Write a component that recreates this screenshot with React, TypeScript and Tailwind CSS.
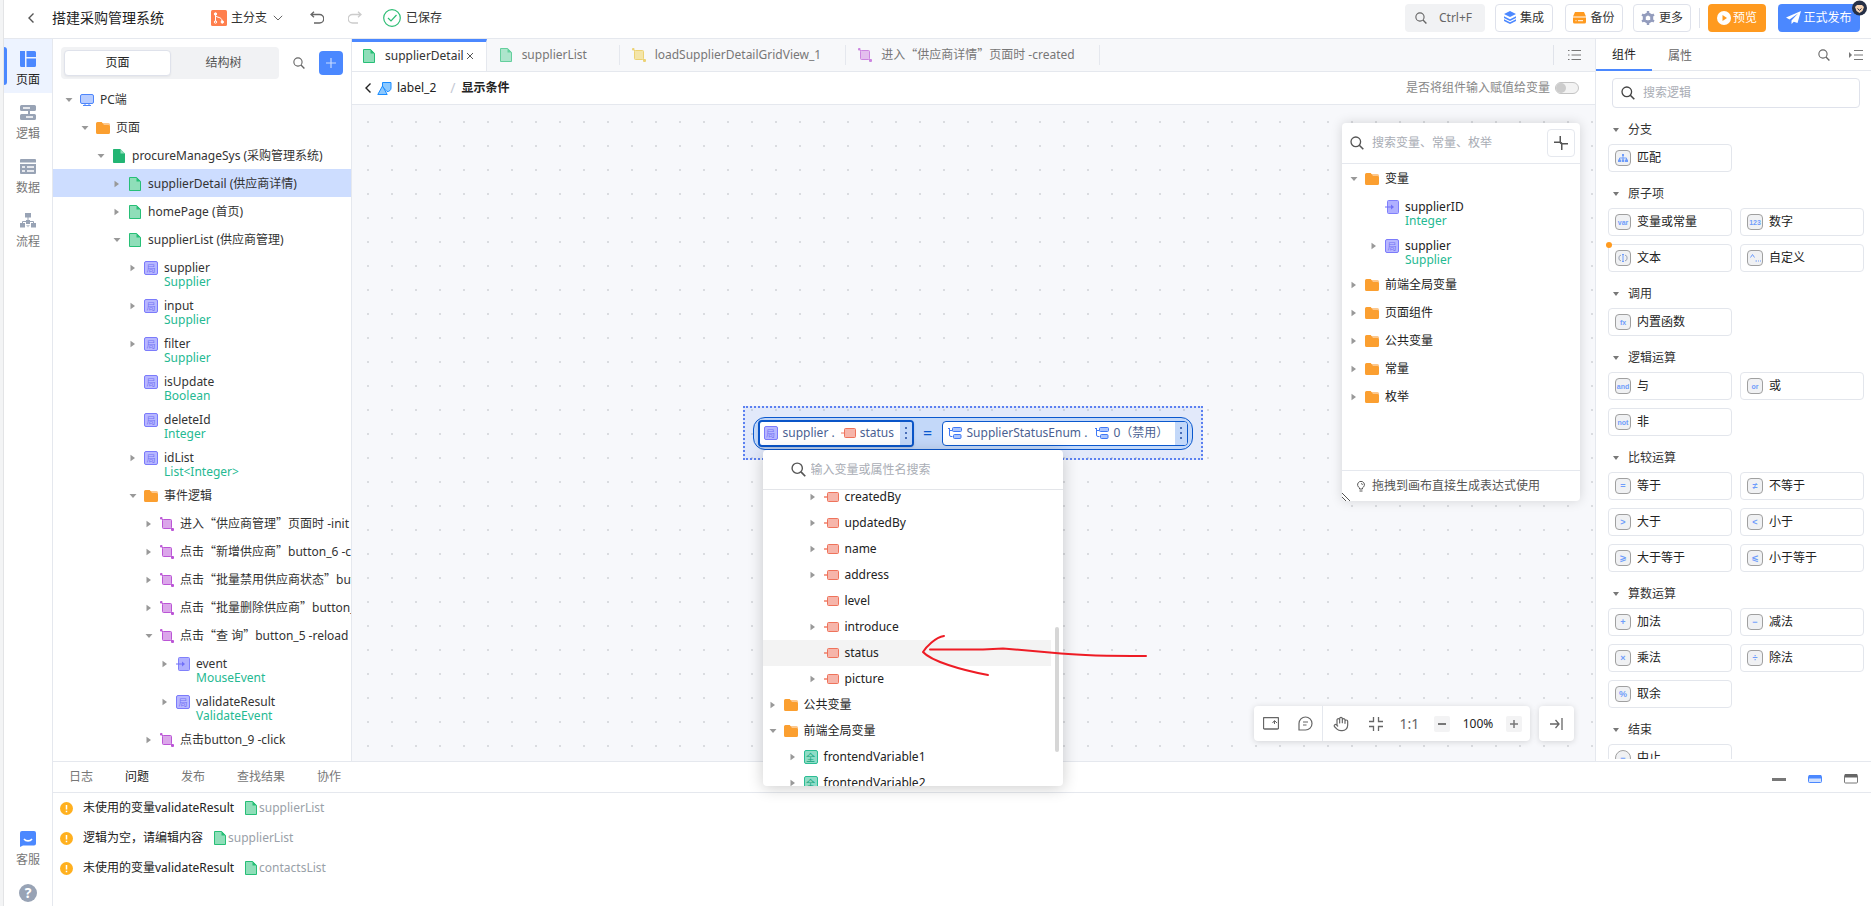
import React, { useState } from 'react';
import clsx from 'clsx';

type IconName =
  | 'pc'
  | 'folder'
  | 'pageSolid'
  | 'page'
  | 'local'
  | 'param'
  | 'event'
  | 'attr'
  | 'global';

type TreeItem = {
  level: number;
  icon: IconName;
  label: string;
  type?: string;
  arrow?: 'open' | 'closed';
  active?: boolean;
};

const PageIcon = ({ solid = false }: { solid?: boolean }) => (
  <svg width="14" height="14" viewBox="0 0 14 14" className="shrink-0">
    <path
      d="M1.5.5h7l4 4v9h-11z"
      fill={solid ? '#22b573' : '#8fdeb9'}
      stroke={solid ? '#22b573' : '#27bf77'}
    />
    <path d="M8.5 0v4.5H13z" fill={solid ? '#8fdeb9' : '#27bf77'} />
  </svg>
);

const FolderIcon = () => (
  <svg width="14" height="12" viewBox="0 0 14 12" className="shrink-0">
    <path d="M6 1h6.5A1.5 1.5 0 0 1 14 2.500V5H6z" fill="#fcc88e" />
    <path
      d="M0 1.500A1.500 1.500 0 0 1 1.500 0h4.200L8 3h4.500A1.500 1.500 0 0 1 14 4.500v6a1.500 1.500 0 0 1-1.500 1.500h-11A1.500 1.500 0 0 1 0 10.500z"
      fill="#fb9f30"
    />
  </svg>
);

const PcIcon = () => (
  <svg width="14" height="14" viewBox="0 0 14 14" className="shrink-0">
    <rect x=".5" y="1.500" width="13" height="9" rx="1.500" fill="#b8cdff" stroke="#4e86fb" />
    <path d="M3 12.500h8M5 11v2M9 11v2" stroke="#4e86fb" />
  </svg>
);

const LocalIcon = () => (
  <span className="flex size-3.5 shrink-0 items-center justify-center rounded-xs border border-[#7b7bfb] bg-[#b7b7ff] text-[9px] leading-none text-[#7474f5]">
    局
  </span>
);

const GlobalIcon = () => (
  <span className="flex size-3.5 shrink-0 items-center justify-center rounded-xs border border-[#2bbd94] bg-[#8fdcc6] text-[9px] leading-none text-[#13a37b]">
    全
  </span>
);

const ParamIcon = () => (
  <svg width="14" height="14" viewBox="0 0 14 14" className="shrink-0">
    <rect x="2.500" y=".5" width="11" height="13" rx="1" fill="#b0b0ff" stroke="#8080fb" />
    <path d="M0 7h6" stroke="#7070f8" />
    <path d="M6 4.500v5L9 7z" fill="#7070f8" />
  </svg>
);

const EventIcon = ({ color = '#bb55d6', fill = '#dba6ea' }: { color?: string; fill?: string }) => (
  <svg width="14" height="14" viewBox="0 0 14 14" className="shrink-0">
    <path d="M1 1l3 3M10 10l3 3" stroke={color} />
    <rect x="2.500" y="2.500" width="9" height="9" rx="1" fill={fill} stroke={color} />
    <rect width="2.500" height="2.500" rx="1" fill={color} />
    <rect x="11" y="11" width="3" height="3" rx="1" fill={color} />
  </svg>
);

const AttrIcon = ({ outline = false }: { outline?: boolean }) => (
  <svg width="15" height="12" viewBox="0 0 15 12" className="shrink-0">
    <path d="M0 6h3" stroke="#f0775f" strokeWidth={outline ? 1 : 2} opacity={outline ? 1 : 0.7} />
    <rect x="3.500" y="1.500" width="11" height="9" rx="1" fill="#f6b5aa" stroke="#ef735b" />
  </svg>
);

const EnumIcon = () => (
  <svg width="14" height="12" viewBox="0 0 14 12" className="shrink-0">
    <path d="M0 1.500h2M1.500 1.500V8a1.500 1.500 0 0 0 1.500 1.500h1.500M1.500 3.500h3" stroke="#3f78f5" fill="none" />
    <rect x="4.500" y=".5" width="9" height="4" rx="1" fill="#a9c4ff" stroke="#3f78f5" />
    <rect x="5.500" y="7.500" width="7.500" height="4" rx="1" fill="#a9c4ff" stroke="#3f78f5" />
  </svg>
);

const SearchIcon = ({ size = 14, className }: { size?: number; className?: string }) => (
  <svg
    width={size}
    height={size}
    viewBox="0 0 14 14"
    fill="none"
    stroke="currentColor"
    strokeWidth="1.300"
    className={clsx('shrink-0', className)}
  >
    <circle cx="5.800" cy="5.800" r="4.800" />
    <path d="M9.300 9.300l4 4" strokeWidth="1.600" />
  </svg>
);

const ChevronLeft = ({ className }: { className?: string }) => (
  <svg width="8" height="12" viewBox="0 0 8 12" fill="none" stroke="currentColor" strokeWidth="1.400" className={className}>
    <path d="M6.500 1.500L2 6l4.500 4.500" />
  </svg>
);

const Caret = ({ open }: { open: boolean }) => (
  <svg width="8" height="8" viewBox="0 0 8 8" fill="#999">
    {open ? <path d="M.5 2h7L4 6z" /> : <path d="M1.500.800v6.400L6 4z" />}
  </svg>
);

const SmallCaret = () => (
  <svg width="6" height="4" viewBox="0 0 6 4" fill="#777">
    <path d="M0 0h6L3 4z" />
  </svg>
);

const TreeIcon = ({ name }: { name: IconName }) => {
  if (name === 'pc') return <PcIcon />;
  if (name === 'folder') return <FolderIcon />;
  if (name === 'pageSolid') return <PageIcon solid />;
  if (name === 'page') return <PageIcon />;
  if (name === 'local') return <LocalIcon />;
  if (name === 'param') return <ParamIcon />;
  if (name === 'event') return <EventIcon />;
  if (name === 'attr') return <AttrIcon />;
  return <GlobalIcon />;
};

// Chinese quotes need the full-width glyphs of the CJK font
const Label = ({ text }: { text: string }) => (
  <>
    {text.split(/([“”])/).map((part, index) =>
      part === '“' || part === '”' ? (
        <span key={index} className="font-['Noto_Sans_CJK_SC',sans-serif] leading-none">
          {part}
        </span>
      ) : (
        part
      ),
    )}
  </>
);

const INDENT = 16;

const TreeRow = ({ item }: { item: TreeItem }) => (
  <li className={clsx('flex items-start pt-2 pl-2', item.type ? 'pb-0.5' : 'pb-1.5', item.active && 'bg-[#cdddff]')}>
    <span style={{ width: item.level * INDENT }} className="shrink-0" />
    <span className="flex h-3.5 w-[19px] shrink-0 items-center pl-1">
      {item.arrow && (
        <button aria-label={item.label}>
          <Caret open={item.arrow === 'open'} />
        </button>
      )}
    </span>
    <span className="flex h-3.5 shrink-0 items-center">
      <TreeIcon name={item.icon} />
    </span>
    <div className="ml-1.5 whitespace-nowrap leading-[14px]">
      <div className="h-3.5">
        <Label text={item.label} />
      </div>
      {item.type && <div className="text-[#25b992]">{item.type}</div>}
    </div>
  </li>
);

const pageTree: TreeItem[] = [
  { level: 0, icon: 'pc', label: 'PC端', arrow: 'open' },
  { level: 1, icon: 'folder', label: '页面', arrow: 'open' },
  { level: 2, icon: 'pageSolid', label: 'procureManageSys (采购管理系统)', arrow: 'open' },
  { level: 3, icon: 'page', label: 'supplierDetail (供应商详情)', arrow: 'closed', active: true },
  { level: 3, icon: 'page', label: 'homePage (首页)', arrow: 'closed' },
  { level: 3, icon: 'page', label: 'supplierList (供应商管理)', arrow: 'open' },
  { level: 4, icon: 'local', label: 'supplier', type: 'Supplier', arrow: 'closed' },
  { level: 4, icon: 'local', label: 'input', type: 'Supplier', arrow: 'closed' },
  { level: 4, icon: 'local', label: 'filter', type: 'Supplier', arrow: 'closed' },
  { level: 4, icon: 'local', label: 'isUpdate', type: 'Boolean' },
  { level: 4, icon: 'local', label: 'deleteId', type: 'Integer' },
  { level: 4, icon: 'local', label: 'idList', type: 'List<Integer>', arrow: 'closed' },
  { level: 4, icon: 'folder', label: '事件逻辑', arrow: 'open' },
  { level: 5, icon: 'event', label: '进入“供应商管理”页面时 -init', arrow: 'closed' },
  { level: 5, icon: 'event', label: '点击“新增供应商”button_6 -click', arrow: 'closed' },
  { level: 5, icon: 'event', label: '点击“批量禁用供应商状态”button_7 -click', arrow: 'closed' },
  { level: 5, icon: 'event', label: '点击“批量删除供应商”button_8 -click', arrow: 'closed' },
  { level: 5, icon: 'event', label: '点击“查 询”button_5 -reload', arrow: 'open' },
  { level: 6, icon: 'param', label: 'event', type: 'MouseEvent', arrow: 'closed' },
  { level: 6, icon: 'local', label: 'validateResult', type: 'ValidateEvent', arrow: 'closed' },
  { level: 5, icon: 'event', label: '点击button_9 -click', arrow: 'closed' },
];

const Header = () => (
  <header className="flex h-[39px] shrink-0 items-center border-b border-[#e5e8ee] pr-[11px] pb-[3px] pl-[23px]">
    <button aria-label="返回" className="text-[#555]">
      <ChevronLeft />
    </button>
    <h1 className="ml-[17px] text-sm text-[#222]">搭建采购管理系统</h1>
    <button className="ml-[47px] flex items-center gap-1">
      <svg width="16" height="16" viewBox="0 0 16 16" fill="none" stroke="#fff">
        <rect width="16" height="16" rx="1.500" fill="#ff7f4d" stroke="none" />
        <path d="M4.500 4.500v7M4.500 5.500c1 2.500 6.500 1 6.500 5.500" />
        <circle cx="4.500" cy="4" r="1.200" fill="#fff" />
        <circle cx="4.500" cy="12" r="1.200" />
        <circle cx="11.300" cy="12" r="1.200" fill="#fff" />
      </svg>
      主分支
      <svg width="10" height="6" viewBox="0 0 10 6" fill="none" stroke="#666" className="ml-0.5">
        <path d="M.8.800L5 5 9.200.800" />
      </svg>
    </button>
    <button aria-label="撤销" className="ml-[27px] text-[#666]">
      <svg width="14" height="14" viewBox="0 0 14 14" fill="none" stroke="currentColor" strokeWidth="1.300">
        <path d="M4 .8L1 3.500l3 2.800M1 3.500h8.500a4.200 4.200 0 0 1 0 8.500H4" />
      </svg>
    </button>
    <button aria-label="重做" disabled className="ml-6 text-[#ccc]">
      <svg width="14" height="14" viewBox="0 0 14 14" fill="none" stroke="currentColor" strokeWidth="1.300">
        <path d="M10 .8l3 2.700-3 2.800M13 3.500H4.500a4.200 4.200 0 0 0 0 8.500H10" />
      </svg>
    </button>
    <div className="ml-[21px] flex items-center gap-[5px]">
      <svg width="18" height="18" viewBox="0 0 18 18" fill="none" stroke="#2dbd74" strokeWidth="1.200">
        <circle cx="9" cy="9" r="8.300" />
        <path d="M5 9l3 3 5.500-6" />
      </svg>
      已保存
    </div>

    <div className="ml-auto flex items-center">
      <button className="flex h-7 w-20 items-center rounded bg-[#f1f2f4] pl-2.5 text-[#666]">
        <SearchIcon size={12} />
        <span className="ml-3">Ctrl+F</span>
      </button>
      <button className="ml-2.5 flex h-7 w-[58px] items-center justify-center gap-1 rounded border border-[#dfe2eb]">
        <svg width="12" height="13" viewBox="0 0 12 13" fill="#4c88ff">
          <path d="M6 0l6 3-6 3-6-3zM0 5.200l6 3 6-3v1.900l-6 3-6-3zM0 8.200l6 3 6-3v1.800l-6 3-6-3z" />
        </svg>
        集成
      </button>
      <button className="ml-3 flex h-7 w-[58px] items-center justify-center gap-1 rounded border border-[#dfe2eb]">
        <svg width="13" height="12" viewBox="0 0 13 12">
          <path d="M2 0h9l2 4.500H0zM0 5.500h13V10a1.500 1.500 0 0 1-1.500 1.500h-10A1.500 1.500 0 0 1 0 10z" fill="#ff9a1f" />
          <path d="M2.500 8.700h1M5 8.700h5" stroke="#fff" />
        </svg>
        备份
      </button>
      <button className="ml-2.5 flex h-7 w-[58px] items-center justify-center gap-1 rounded border border-[#dfe2eb]">
        <svg width="14" height="14" viewBox="0 0 14 14" fill="none" stroke="#939cbd">
          <path d="M7 2.800l3.700 2.100v4.200L7 11.200 3.300 9.100V4.900z" strokeWidth="3" strokeLinejoin="round" />
          <path d="M7 0v3M7 11v3M1 3.500L3.500 5M10.500 9l2.500 1.500M1 10.500L3.500 9M10.500 5L13 3.500" strokeWidth="2.400" />
        </svg>
        更多
      </button>
      <span className="ml-2 h-5 w-px bg-[#dfe2eb]" />
      <button className="ml-2 flex h-7 w-[58px] items-center justify-center gap-0.5 rounded bg-[#ff9a1f] text-white">
        <svg width="14" height="14" viewBox="0 0 14 14">
          <circle cx="7" cy="7" r="7" fill="#fff" />
          <path d="M5.500 4v6l4.500-3z" fill="#ff9a1f" />
        </svg>
        预览
      </button>
      <div className="relative ml-3">
        <button className="flex h-7 w-[82px] items-center justify-center gap-0.5 rounded bg-[#4b88ff] text-white">
          <svg width="15" height="13" viewBox="0 0 15 13" fill="#fff">
            <path d="M15 0L0 6.500l3.500 2L12 2.500 5.500 9.500V13l2.300-2.300L11.500 12z" />
          </svg>
          正式发布
        </button>
        <svg width="15" height="16" viewBox="0 0 15 16" className="absolute -top-1 -right-[7px]">
          <circle cx="7.500" cy="8" r="7.500" fill="#263047" />
          <path d="M3 7l2-2h5l2 2-1.500 4-3 2-3-2z" fill="#f6d4b4" />
          <path d="M5.500 8.500l2 1.800 2-1.800" stroke="#263047" fill="none" />
        </svg>
      </div>
    </div>
  </header>
);

const railItems = [
  {
    name: '页面',
    icon: <path d="M0 0h5v16H1.500A1.500 1.500 0 0 1 0 14.500zM6.500 0h8A1.500 1.500 0 0 1 16 1.500V6H6.500zM6.500 7.500H16v7a1.500 1.500 0 0 1-1.500 1.500h-8z" />,
  },
  {
    name: '逻辑',
    icon: (
      <>
        <path d="M1.500 0h13A1.500 1.500 0 0 1 16 1.500v3A1.500 1.500 0 0 1 14.500 6h-13A1.500 1.500 0 0 1 0 4.500v-3A1.500 1.500 0 0 1 1.500 0zM1.500 9h13a1.500 1.500 0 0 1 1.500 1.500v3a1.500 1.500 0 0 1-1.500 1.500h-13A1.500 1.500 0 0 1 0 13.500v-3A1.500 1.500 0 0 1 1.500 9z" />
        <path d="M3 3h7M6 12h7" stroke="#fff" strokeWidth="1.300" />
        <path d="M9 5.500v4" stroke="currentColor" strokeWidth="2" />
      </>
    ),
  },
  {
    name: '数据',
    icon: (
      <>
        <path d="M1 0h14a1 1 0 0 1 1 1v2.500H0V1a1 1 0 0 1 1-1zM0 5h16v9a1 1 0 0 1-1 1H1a1 1 0 0 1-1-1z" />
        <path d="M2 8h3M7 8h7M2 12h3M7 12h7" stroke="#fff" strokeWidth="1.600" />
      </>
    ),
  },
  {
    name: '流程',
    icon: (
      <>
        <path d="M5 0h6v4.500H5zM0 10h5v4.500H0zM6 7h4v4H6zM11 10h5v4.500h-5z" />
        <path d="M8 4v4M2.500 10V8.500h11V10" stroke="currentColor" fill="none" />
        <path d="M6 12l2 2.500 2-2.500z" opacity=".6" />
      </>
    ),
  },
];

const Rail = () => (
  <nav className="flex w-[49px] shrink-0 flex-col border-r border-[#e5e8ee]">
    {railItems.map(({ name, icon }, index) => (
      <button
        key={name}
        className={clsx(
          'relative flex h-[54px] flex-col items-center pt-3',
          index === 0 ? 'bg-[#edf3ff] text-[#222]' : 'text-[#777]',
        )}
      >
        {index === 0 && <span className="absolute top-2 left-0 h-[38px] w-[3px] rounded-r bg-[#4b88ff]" />}
        <svg
          width="16"
          height="16"
          viewBox="0 0 16 16"
          fill="currentColor"
          className={index === 0 ? 'text-[#4b88ff]' : 'text-[#98a3b5]'}
        >
          {icon}
        </svg>
        <span className="mt-1 leading-[18px]">{name}</span>
      </button>
    ))}
    <div className="mt-auto flex flex-col items-center pb-1">
      <button className="flex flex-col items-center text-[#777]">
        <svg width="16" height="16" viewBox="0 0 16 16">
          <path d="M2 0h12a2 2 0 0 1 2 2v10.500a2 2 0 0 1-2 2H3L0 16V2a2 2 0 0 1 2-2z" fill="#4b88ff" />
          <path d="M4 8c2 2.500 6 2.500 8 0" stroke="#fff" strokeWidth="1.600" fill="none" />
        </svg>
        <span className="mt-1 leading-[18px]">客服</span>
      </button>
      <button
        aria-label="帮助"
        className="mt-[15px] flex size-[18px] items-center justify-center rounded-full bg-[#98a3b5] text-sm font-bold leading-none text-white"
      >
        ?
      </button>
    </div>
  </nav>
);

const Sidebar = () => (
  <aside className="flex w-[299px] shrink-0 flex-col overflow-hidden border-r border-[#e5e8ee]">
    <div className="flex h-[46px] shrink-0 items-center pt-0.5 pr-2 pl-2">
      <div className="flex h-8 w-[218px] rounded bg-[#f1f2f4] p-[3px]">
        <button className="flex-1 rounded border border-[#dfe2eb] bg-white text-[#222] shadow-xs">页面</button>
        <button className="flex-1 text-[#555]">结构树</button>
      </div>
      <button aria-label="搜索" className="ml-3.5 text-[#666]">
        <SearchIcon size={12} />
      </button>
      <button aria-label="新增" className="ml-auto flex size-6 items-center justify-center rounded bg-[#4b88ff]">
        <svg width="10" height="10" viewBox="0 0 10 10" stroke="#c9dbff" strokeWidth="1.200">
          <path d="M5 0v10M0 5h10" />
        </svg>
      </button>
    </div>
    <ul>
      {pageTree.map((item, index) => (
        <TreeRow key={index} item={item} />
      ))}
    </ul>
  </aside>
);

const EditorTabs = () => (
  <div className="flex h-[33px] shrink-0 items-stretch border-b border-[#e5e8ee] bg-[#f7f8fa] text-[#777]">
    <div className="flex items-center border-t-3 border-r border-t-[#4b88ff] border-r-[#e5e8ee] bg-white pr-3 pb-0.5 pl-2.5 text-[#333]">
      <PageIcon />
      <span className="ml-[9px]">supplierDetail</span>
      <button aria-label="关闭" className="ml-0.5">
        <svg width="8" height="8" viewBox="0 0 8 8" stroke="#555">
          <path d="M1 1l6 6M7 1L1 7" />
        </svg>
      </button>
    </div>
    <EditorTab icon={<PageIcon />} name="supplierList" />
    <EditorTab icon={<EventIcon color="#e8c33c" fill="#f3dd86" />} name="loadSupplierDetailGridView_1" />
    <EditorTab icon={<EventIcon />} name="进入“供应商详情”页面时 -created" />
    <div className="my-1.5 ml-auto flex w-[42px] items-center justify-center border-l border-[#e0e3ea]">
      <button aria-label="标签列表">
        <svg width="13" height="10" viewBox="0 0 13 10" stroke="#777">
          <path d="M0 .5h1.500M3.500.500H13M0 5h1.500M3.500 5H13M0 9.500h1.500M3.500 9.500H13" />
        </svg>
      </button>
    </div>
  </div>
);

const EditorTab = ({ icon, name }: { icon: React.ReactNode; name: string }) => (
  <button className="my-1.5 flex min-w-[133px] items-center border-r border-[#e5e8ee] pr-6 pl-3 whitespace-nowrap">
    <span className="opacity-70">{icon}</span>
    <span className="ml-[9px]">
      <Label text={name} />
    </span>
  </button>
);

const DropdownRow = ({ item, highlighted }: { item: TreeItem; highlighted?: boolean }) => (
  <li className={clsx('mr-3 flex h-[26px] items-center pl-1.5', highlighted && 'bg-[#f3f3f3]')}>
    <span style={{ width: item.level * 20 }} className="shrink-0" />
    <span className="flex w-[15px] shrink-0 items-center">
      {item.arrow && (
        <button aria-label={item.label}>
          <Caret open={item.arrow === 'open'} />
        </button>
      )}
    </span>
    <TreeIcon name={item.icon} />
    <span className="ml-1.5 whitespace-nowrap">{item.label}</span>
  </li>
);

const dropdownItems: TreeItem[] = [
  { level: 2, icon: 'attr', label: 'createdBy', arrow: 'closed' },
  { level: 2, icon: 'attr', label: 'updatedBy', arrow: 'closed' },
  { level: 2, icon: 'attr', label: 'name', arrow: 'closed' },
  { level: 2, icon: 'attr', label: 'address', arrow: 'closed' },
  { level: 2, icon: 'attr', label: 'level' },
  { level: 2, icon: 'attr', label: 'introduce', arrow: 'closed' },
  { level: 2, icon: 'attr', label: 'status' },
  { level: 2, icon: 'attr', label: 'picture', arrow: 'closed' },
  { level: 0, icon: 'folder', label: '公共变量', arrow: 'closed' },
  { level: 0, icon: 'folder', label: '前端全局变量', arrow: 'open' },
  { level: 1, icon: 'global', label: 'frontendVariable1', arrow: 'closed' },
  { level: 1, icon: 'global', label: 'frontendVariable2', arrow: 'closed' },
];

const VariableDropdown = () => (
  <div className="absolute top-[42px] left-[18px] z-20 w-[300px] rounded bg-white text-[#222] shadow-[0_2px_16px_rgba(0,0,0,0.2)]">
    <label className="flex h-10 items-center border-b border-[#e3e5e9] pl-7">
      <SearchIcon size={15} className="text-[#555]" />
      <input
        placeholder="输入变量或属性名搜索"
        className="ml-[5px] w-60 outline-none placeholder:text-[#a9adb5]"
      />
    </label>
    <div className="h-[296px] overflow-hidden">
      <ul className="-mt-1.5">
        {dropdownItems.map((item) => (
          <DropdownRow key={item.label} item={item} highlighted={item.label === 'status'} />
        ))}
      </ul>
    </div>
    <span className="absolute top-[177px] right-1 h-[125px] w-1 rounded-full bg-[#d6d6d6]" />
    <svg
      width="240"
      height="60"
      viewBox="0 0 240 60"
      fill="none"
      stroke="#ee1c25"
      strokeWidth="2"
      strokeLinecap="round"
      strokeLinejoin="round"
      className="pointer-events-none absolute top-[180px] left-[150px]"
    >
      <path d="M17 19.500h53L90 18.500 148 23.500C175 26 200 26 233 26" />
      <path d="M31 6C22 7.500 13 17 10 22c8 9 38 18 65 23" />
    </svg>
  </div>
);

const MoreDots = () => (
  <svg width="2" height="12" viewBox="0 0 2 12" fill="#4a6fb8">
    <path d="M0 0h2v2H0zM0 5h2v2H0zM0 10h2v2H0z" />
  </svg>
);

const Expression = () => (
  <div className="relative flex h-[54px] w-[460px] items-center justify-center border-2 border-dotted border-[#5b80f0] bg-[#4b80f5]/12 text-[#4a5f92]">
    <div className="flex h-[33px] w-[440px] items-center rounded-xl border border-[#0a58ce] bg-[#c3d8f9] px-1">
      <div className="flex h-[27px] w-[156px] items-stretch overflow-hidden rounded border-2 border-[#0a55c8] bg-white shadow">
        <div className="flex flex-1 items-center pl-1">
          <LocalIcon />
          <span className="ml-[5px]">supplier .</span>
          <span className="ml-1.5 flex items-center gap-1">
            <AttrIcon outline />
            status
          </span>
        </div>
        <button aria-label="更多操作" className="flex w-3 items-center justify-center bg-[#c3d8f9]">
          <MoreDots />
        </button>
      </div>
      <span className="flex-1 text-center text-base leading-none text-[#0a58ce]">=</span>
      <div className="flex h-[25px] w-[246px] items-stretch overflow-hidden rounded border border-[#0a58ce] bg-white">
        <div className="flex flex-1 items-center pl-[5px]">
          <EnumIcon />
          <span className="ml-[5px]">SupplierStatusEnum .</span>
          <span className="ml-2 flex items-center gap-1">
            <EnumIcon />
            0（禁用）
          </span>
        </div>
        <button aria-label="更多操作" className="flex w-3 items-center justify-center bg-[#c3d8f9]">
          <MoreDots />
        </button>
      </div>
    </div>
    <VariableDropdown />
  </div>
);

const folders = ['前端全局变量', '页面组件', '公共变量', '常量', '枚举'];

const VariablePanel = () => (
  <section className="absolute top-[18px] right-[15px] flex h-[378px] w-[238px] flex-col rounded bg-white text-[#222] shadow-[0_0_12px_rgba(0,0,0,0.15)]">
    <div className="flex h-[41px] shrink-0 items-center border-b border-[#e5e8ee] pr-[5px] pl-2">
      <SearchIcon size={14} className="text-[#555]" />
      <input
        aria-label="搜索变量"
        placeholder="搜索变量、常量、枚举"
        className="ml-2 min-w-0 flex-1 outline-none placeholder:text-[#a9adb5]"
      />
      <button aria-label="收起" className="flex size-7 items-center justify-center rounded border border-[#e5e8ee]">
        <svg width="14" height="14" viewBox="0 0 14 14" fill="none" stroke="#555" strokeWidth="1.500">
          <path d="M0 6h5.500M7.750 14V6.750H5M6.250 0v7.250M6.250 7.750H14" stroke="none" />
          <path d="M0 6.250h5.750a2 2 0 0 1 2 2V14M6.250 0v5.750a2 2 0 0 0 2 2H14" />
        </svg>
      </button>
    </div>
    <ul className="-ml-1">
      <TreeRow item={{ level: 0, icon: 'folder', label: '变量', arrow: 'open' }} />
      <li className="pb-px pl-1">
        <ul>
          <TreeRow item={{ level: 1, icon: 'param', label: 'supplierID', type: 'Integer' }} />
        </ul>
      </li>
      <li className="pb-px pl-1">
        <ul>
          <TreeRow item={{ level: 1, icon: 'local', label: 'supplier', type: 'Supplier', arrow: 'closed' }} />
        </ul>
      </li>
      {folders.map((label) => (
        <TreeRow key={label} item={{ level: 0, icon: 'folder', label, arrow: 'closed' }} />
      ))}
    </ul>
    <footer className="mt-auto flex h-[31px] items-center border-t border-[#e5e8ee] pl-[15px] text-[#555]">
      <svg width="8" height="11" viewBox="0 0 8 11" fill="none" stroke="#555">
        <path d="M2.500 8V6.800a3.400 3.400 0 1 1 3 0V8zM2.500 10h3" />
        <path d="M4 2.500a1.500 1.500 0 0 1 1.500 1.500" strokeWidth=".8" />
      </svg>
      <span className="ml-[7px]">拖拽到画布直接生成表达式使用</span>
    </footer>
    <svg width="8" height="8" viewBox="0 0 8 8" stroke="#555" className="absolute bottom-0 left-0">
      <path d="M0 0l8 8M0 4l4 4" />
    </svg>
  </section>
);

const CanvasToolbar = () => (
  <div className="absolute right-[21px] bottom-5 flex gap-[9px] text-[#666]">
    <div className="flex h-[35px] items-center rounded bg-white shadow-[0_1px_6px_rgba(0,0,0,0.15)]">
      <button aria-label="缩略图" className="flex w-[34px] justify-center">
        <svg width="16" height="13" viewBox="0 0 16 13" fill="none" stroke="currentColor">
          <rect x=".500" y=".5" width="15" height="11.500" rx="1" strokeWidth="1.300" />
          <path d="M9.500 6l2-2.500L14 6M11.500 4v3" />
        </svg>
      </button>
      <button aria-label="注释" className="flex h-full w-[35px] items-center justify-center border-r border-[#e5e8ee]">
        <svg width="15" height="15" viewBox="0 0 15 15" fill="none" stroke="currentColor" strokeWidth="1.200">
          <path d="M1 14V7.500A6.500 6.500 0 1 1 7.500 14zM5 6h5M5 9h3.500" />
        </svg>
      </button>
      <button aria-label="拖动" className="flex w-9 justify-center">
        <svg width="16" height="16" viewBox="0 0 24 24" fill="none" stroke="currentColor" strokeWidth="1.800" strokeLinejoin="round" strokeLinecap="round">
          <path d="M18 11V6a2 2 0 0 0-4 0M14 10V4a2 2 0 0 0-4 0v6M10 10.500V6a2 2 0 0 0-4 0v8M18 8a2 2 0 1 1 4 0v6a8 8 0 0 1-8 8h-2c-2.800 0-4.500-.86-5.990-2.340l-3.600-3.600a2 2 0 0 1 2.830-2.820L7 15" />
        </svg>
      </button>
      <button aria-label="适应画布" className="flex w-[33px] justify-center">
        <svg width="14" height="14" viewBox="0 0 14 14" fill="none" stroke="currentColor" strokeWidth="1.300">
          <path d="M0 4.500h4.500V0M9.500 0v4.500H14M0 9.500h4.500V14M9.500 14V9.500H14" />
        </svg>
      </button>
      <button className="w-[35px] text-center text-sm">1:1</button>
      <button aria-label="缩小" className="ml-[7px] flex size-4 items-center justify-center rounded-xs bg-[#f3f3f4]">
        <span className="h-0.5 w-2 bg-[#777]" />
      </button>
      <span className="w-14 text-center text-[#222]">100%</span>
      <button aria-label="放大" className="mr-2 flex size-4 items-center justify-center rounded-xs bg-[#f3f3f4]">
        <svg width="8" height="8" viewBox="0 0 8 8" stroke="#777" strokeWidth="1.500">
          <path d="M4 0v8M0 4h8" />
        </svg>
      </button>
    </div>
    <button
      aria-label="收起面板"
      className="flex size-[35px] items-center justify-center rounded bg-white shadow-[0_1px_6px_rgba(0,0,0,0.15)]"
    >
      <svg width="13" height="12" viewBox="0 0 13 12" fill="none" stroke="currentColor" strokeWidth="1.300">
        <path d="M0 6h9M5.500 2L9 6l-3.500 4M12 0v12" />
      </svg>
    </button>
  </div>
);

const Editor = () => {
  const [assign, setAssign] = useState(false);

  return (
    <main className="flex min-w-0 flex-1 flex-col">
      <EditorTabs />
      <div className="flex h-[33px] shrink-0 items-center border-b border-[#e5e8ee] pr-4 pl-3">
        <button aria-label="返回" className="text-[#222]">
          <ChevronLeft />
        </button>
        <svg width="15" height="13" viewBox="0 0 15 13" fill="#8cc9ff" stroke="#1a8cff" className="ml-[5px]">
          <path d="M5.500.500h8.500v5.500a3.500 3.500 0 0 1-4 3.500L5.500 5z" />
          <path d="M5.500 4L.800 12.500h9.400z" />
        </svg>
        <span className="ml-[5px] text-[#222]">label_2</span>
        <span className="mr-1.5 ml-3.5 text-sm text-[#c5cad5]">/</span>
        <span className="font-bold text-[#222]">显示条件</span>
        <label className="ml-auto flex items-center gap-[5px] text-[#888]">
          是否将组件输入赋值给变量
          <input
            type="checkbox"
            checked={assign}
            onChange={() => setAssign(!assign)}
            className="h-3 w-6 appearance-none rounded-full border border-[#c4c4c4] bg-[#f3f3f3] before:block before:size-2.5 before:rounded-full before:bg-[#ccc]"
          />
        </label>
      </div>
      <div className="relative flex min-h-0 flex-1 items-center justify-center bg-[#f7f8fb] pr-0.5">
        <svg className="absolute inset-0 size-full">
          <defs>
            <pattern id="dots" width="24" height="24" patternUnits="userSpaceOnUse" patternTransform="translate(15 16)">
              <rect width="2" height="2" fill="#dadce0" />
            </pattern>
          </defs>
          <rect width="100%" height="100%" fill="url(#dots)" />
        </svg>
        <Expression />
        <VariablePanel />
        <CanvasToolbar />
      </div>
    </main>
  );
};

type Block = { name: string; mark: string; round?: boolean; dot?: boolean };

const sections: { title: string; blocks: Block[] }[] = [
  { title: '分支', blocks: [{ name: '匹配', mark: 'tree' }] },
  {
    title: '原子项',
    blocks: [
      { name: '变量或常量', mark: 'var' },
      { name: '数字', mark: '123' },
      { name: '文本', mark: 'text', dot: true },
      { name: '自定义', mark: '^...' },
    ],
  },
  { title: '调用', blocks: [{ name: '内置函数', mark: 'fx' }] },
  {
    title: '逻辑运算',
    blocks: [
      { name: '与', mark: 'and' },
      { name: '或', mark: 'or' },
      { name: '非', mark: 'not' },
    ],
  },
  {
    title: '比较运算',
    blocks: [
      { name: '等于', mark: '=' },
      { name: '不等于', mark: '≠' },
      { name: '大于', mark: '>' },
      { name: '小于', mark: '<' },
      { name: '大于等于', mark: '⩾' },
      { name: '小于等于', mark: '⩽' },
    ],
  },
  {
    title: '算数运算',
    blocks: [
      { name: '加法', mark: '+' },
      { name: '减法', mark: '−' },
      { name: '乘法', mark: '×' },
      { name: '除法', mark: '÷' },
      { name: '取余', mark: '%' },
    ],
  },
  { title: '结束', blocks: [{ name: '中止', mark: '−', round: true }] },
];

const BlockMark = ({ mark }: { mark: string }) => {
  if (mark === 'tree')
    return (
      <svg width="10" height="8" viewBox="0 0 10 8" fill="#6f9dfb" stroke="#6f9dfb">
        <path d="M5 1v5M1.500 6V4h7v2" fill="none" />
        <path d="M4 0h2v2H4zM0 5.500h3V8H0zM3.700 5.500h2.600V8H3.700zM7 5.500h3V8H7z" stroke="none" />
      </svg>
    );
  if (mark === 'text')
    return (
      <svg width="10" height="8" viewBox="0 0 10 8" fill="none" stroke="#9aa3b5">
        <path d="M3 1L1 2.500v3L3 7M7 1l2 1.500v3L7 7" />
        <path d="M5 0v8M4 .5h2M4 7.500h2" stroke="#6f9dfb" />
      </svg>
    );
  if (mark === '^...')
    return (
      <svg width="11" height="8" viewBox="0 0 11 8" fill="none" stroke="#6f9dfb">
        <path d="M.5 3.500L2.500.500l2 3M5.500 7H7M8 7h1M10 7h1" />
      </svg>
    );
  return (
    <span
      className={clsx(
        "font-['Liberation_Sans','DejaVu_Sans',sans-serif] leading-none font-bold text-[#6f9dfb]",
        mark.length > 1 ? 'text-[7px]' : 'text-[9px]',
      )}
    >
      {mark}
    </span>
  );
};

const ComponentPanel = () => (
  <aside className="flex w-[276px] shrink-0 flex-col overflow-hidden border-l border-[#e5e8ee]">
    <div className="flex h-8 shrink-0 items-center border-b border-[#e5e8ee] pr-2">
      <button className="-mb-px h-8 border-b-2 border-[#4b88ff] px-4 pt-0.5 text-[#222]">组件</button>
      <button className="h-8 px-4 pt-0.5 text-[#666]">属性</button>
      <button aria-label="搜索" className="ml-auto text-[#666]">
        <SearchIcon size={12} />
      </button>
      <button aria-label="收起" className="ml-[19px]">
        <svg width="14" height="10" viewBox="0 0 14 10" stroke="#777">
          <path d="M0 2v6l3-3z" fill="#777" stroke="none" />
          <path d="M5 .5h9M5 5h9M5 9.500h9" />
        </svg>
      </button>
    </div>
    <label className="mt-[7px] mr-[11px] ml-4 flex h-[30px] shrink-0 items-center rounded border border-[#dfe2eb] pl-2">
      <SearchIcon size={14} className="text-[#444]" />
      <input placeholder="搜索逻辑" className="ml-2 min-w-0 flex-1 outline-none placeholder:text-[#a9adb5]" />
    </label>
    <div className="mb-0.5 min-h-0 flex-1 overflow-hidden pr-[7px] pl-3">
      {sections.map(({ title, blocks }) => (
        <section key={title}>
          <h2 className="flex h-9 items-center gap-[9px] pt-2 pl-[5px] text-[#333]">
            <SmallCaret />
            {title}
          </h2>
          <div className="grid grid-cols-2 gap-2">
            {blocks.map(({ name, mark, round, dot }) => (
              <button key={name} className="relative flex h-7 items-center rounded border border-[#e3e6ec] pl-1.5 text-[#222]">
                <span
                  className={clsx(
                    'flex size-4 items-center justify-center border border-[#a0a0a0] bg-[#f0f1f3]',
                    round ? 'rounded-full' : 'rounded',
                  )}
                >
                  <BlockMark mark={mark} />
                </span>
                <span className="ml-1.5">{name}</span>
                {dot && <span className="absolute -top-[3px] -left-[3px] size-1.5 rounded-full bg-[#ff9a1f]" />}
              </button>
            ))}
          </div>
        </section>
      ))}
    </div>
  </aside>
);

const logTabs = ['日志', '问题', '发布', '查找结果', '协作'];

const problems = [
  { message: '未使用的变量validateResult', target: 'supplierList' },
  { message: '逻辑为空，请编辑内容', target: 'supplierList' },
  { message: '未使用的变量validateResult', target: 'contactsList' },
];

const BottomPanel = () => (
  <section className="h-[145px] shrink-0 border-t border-[#e5e8ee] bg-white">
    <div className="flex h-[31px] items-center gap-8 border-b border-[#e5e8ee] pr-[13px] pl-4">
      {logTabs.map((tab) => (
        <button key={tab} className={tab === '问题' ? 'text-[#222]' : 'text-[#777]'}>
          {tab}
        </button>
      ))}
      <div className="ml-auto flex items-center gap-[22px] pt-1">
        <button aria-label="最小化" className="h-[3px] w-3.5 bg-[#777]" />
        <button aria-label="默认">
          <svg width="14" height="8" viewBox="0 0 14 8">
            <rect x=".5" y=".5" width="13" height="7" rx="1" fill="#cfe0ff" stroke="#4b88ff" />
            <path d="M1 0h12v3.500H1z" fill="#4b88ff" />
          </svg>
        </button>
        <button aria-label="最大化">
          <svg width="14" height="10" viewBox="0 0 14 10">
            <rect x=".5" y=".5" width="13" height="8.500" rx="1" fill="#fff" stroke="#777" />
            <path d="M1 0h12v3.500H1z" fill="#666" />
          </svg>
        </button>
      </div>
    </div>
    <ul>
      {problems.map(({ message, target }, index) => (
        <li key={index} className="flex h-[30px] items-center pl-[7px]">
          <svg width="13" height="13" viewBox="0 0 13 13">
            <circle cx="6.500" cy="6.500" r="6.500" fill="#ffb01f" />
            <path d="M6.500 3v4.500M6.500 8.700v1.500" stroke="#fff" strokeWidth="1.500" />
          </svg>
          <span className="ml-2.5 text-[#222]">{message}</span>
          <a href="#" className="ml-2.5 flex items-center gap-px text-[#999fa8]">
            <PageIcon />
            {target}
          </a>
        </li>
      ))}
    </ul>
  </section>
);

const App = () => {
  return (
    <div className="flex h-screen overflow-hidden bg-[#f3f4f5] pl-[3px] font-['Noto_Sans','Noto_Sans_CJK_SC',sans-serif] text-xs text-[#333]">
      <div className="flex min-w-0 flex-1 flex-col border-l border-[#e3e4e6] bg-white">
        <Header />
        <div className="flex min-h-0 flex-1">
          <Rail />
          <div className="flex min-w-0 flex-1 flex-col">
            <div className="relative z-10 flex min-h-0 flex-1">
              <Sidebar />
              <Editor />
              <ComponentPanel />
            </div>
            <BottomPanel />
          </div>
        </div>
      </div>
    </div>
  );
};

export default App;
